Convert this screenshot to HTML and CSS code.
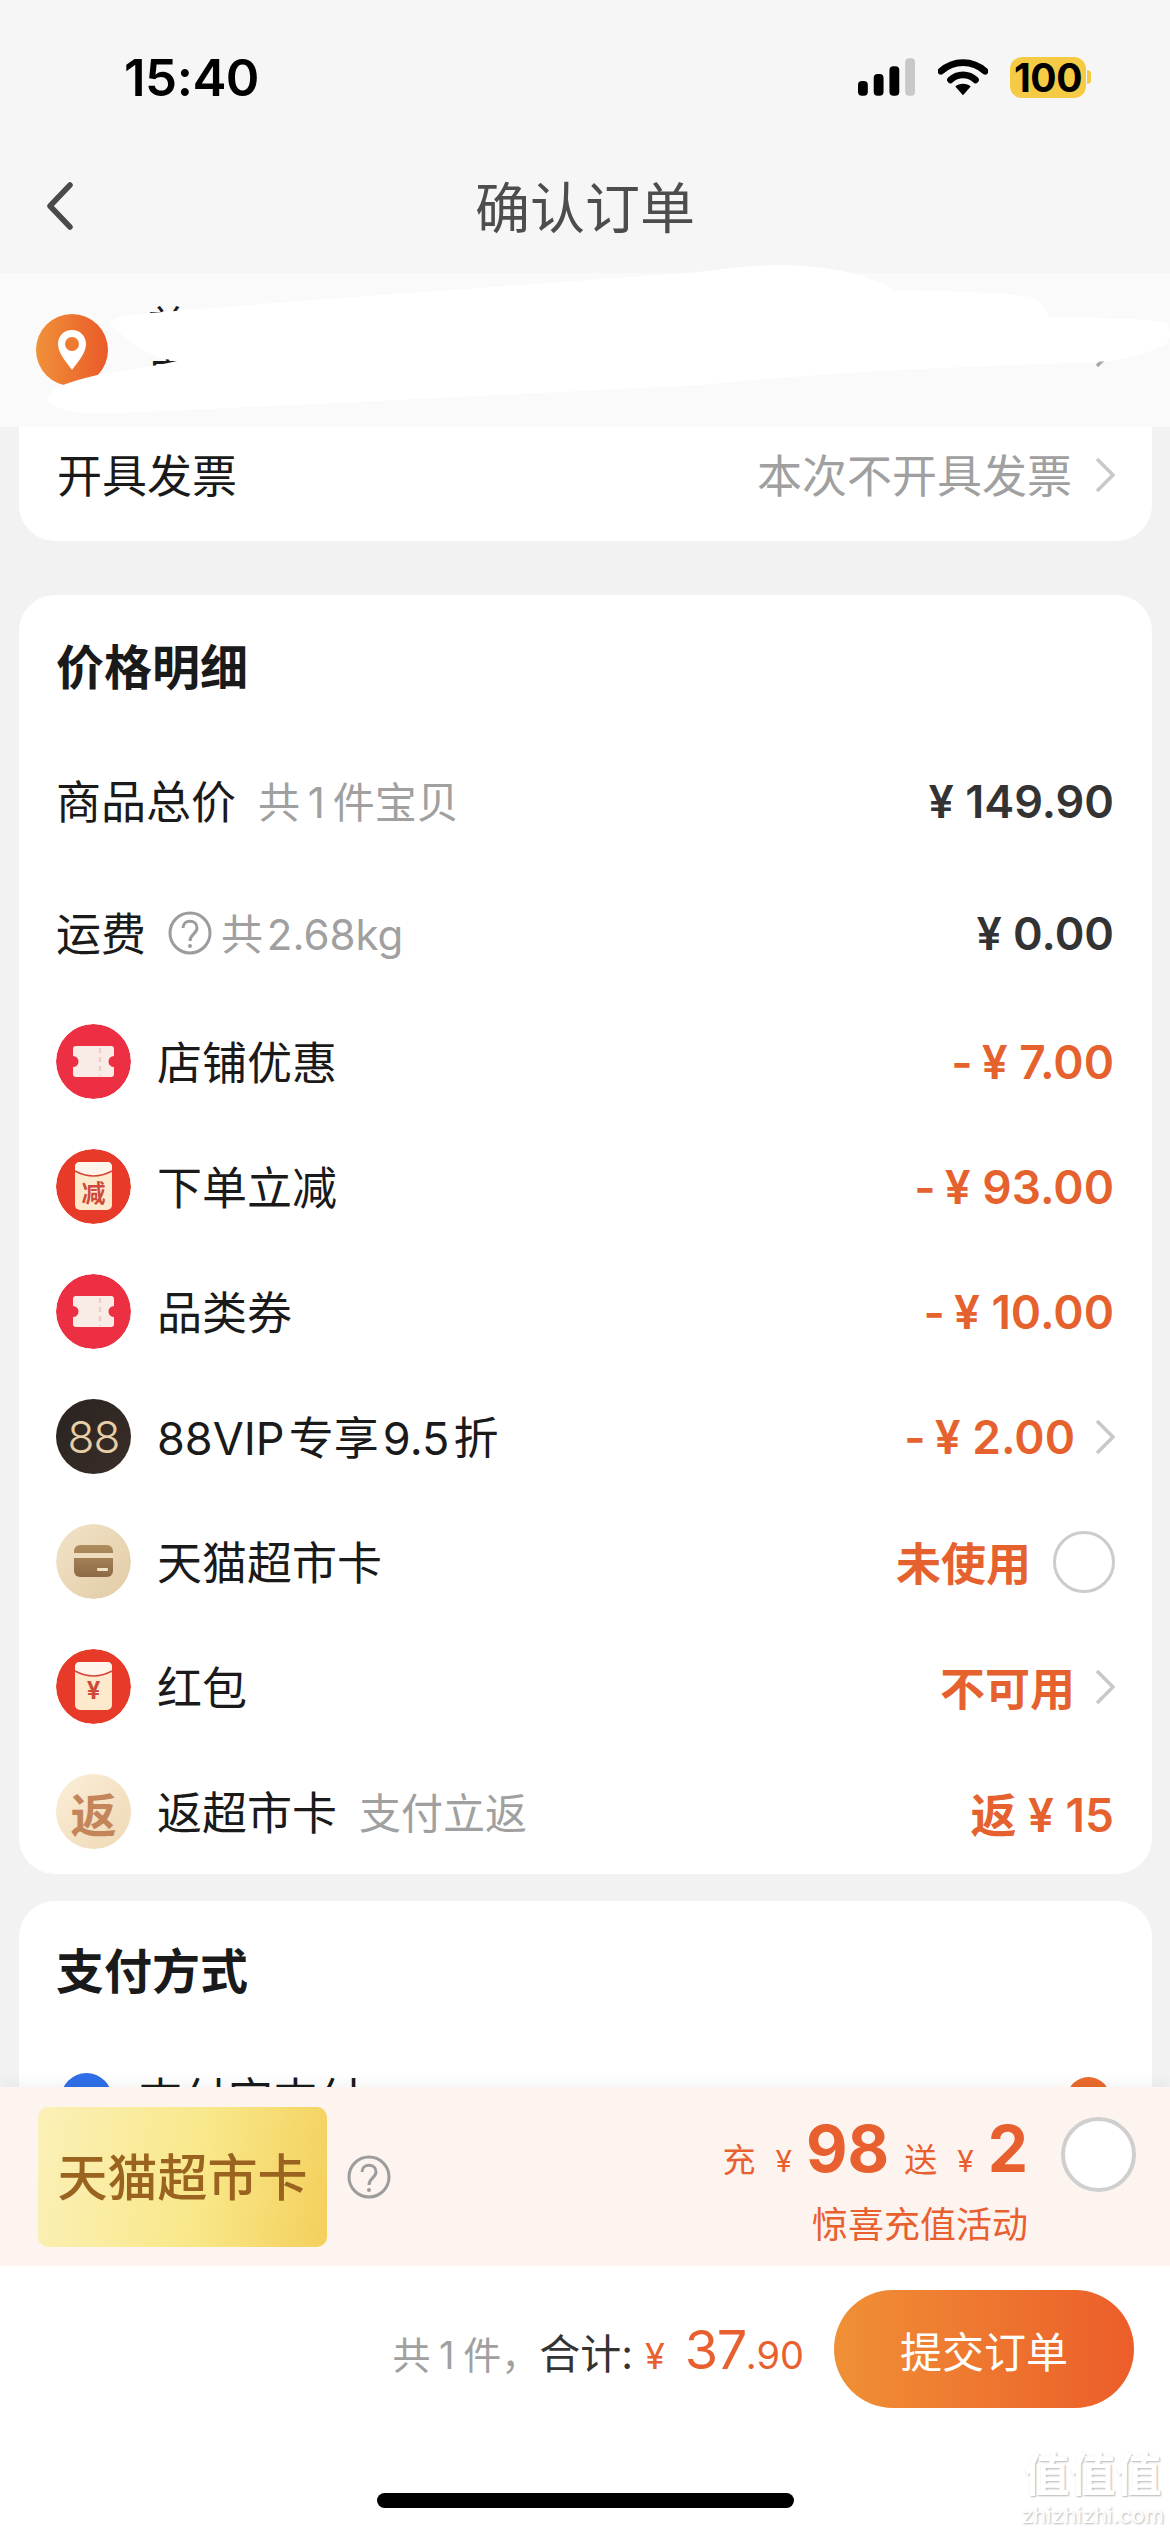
FILE: index.html
```html
<!DOCTYPE html>
<html lang="zh-CN">
<head>
  <meta charset="UTF-8" />
  <meta name="viewport" content="width=device-width, initial-scale=1.0" />
  <title>确认订单</title>
  <link rel="stylesheet" href="styles.css">
</head>

<body>
  <main class="app">
    <header class="top">
      <div class="status-bar">
        <span class="time">15:40</span>
        <div class="status-icons">
          <svg class="signal" width="57" height="38" viewBox="0 0 58 38">
            <rect x="0" y="23" width="10" height="15" rx="4" fill="#000" />
            <rect x="16" y="16" width="10" height="22" rx="4" fill="#000" />
            <rect x="32" y="8" width="10" height="30" rx="4" fill="#000" />
            <rect x="48" y="0" width="10" height="38" rx="4" fill="#c8c8c8" />
          </svg>
          <svg class="wifi" width="50" height="38" viewBox="0 0 52 38">
            <path d="M3 13 C16 1 36 1 49 13" fill="none" stroke="#000" stroke-width="7" stroke-linecap="round" />
            <path d="M13 22 C20 15 32 15 39 22" fill="none" stroke="#000" stroke-width="7" stroke-linecap="round" />
            <path d="M18 29 C22 25 30 25 34 29 L26 38 Z" fill="#000" />
          </svg>
          <div class="battery">
            <span class="battery-level">100</span>
            <span class="battery-nub"></span>
          </div>
        </div>
      </div>

      <nav class="nav">
        <svg class="back" width="28" height="48" viewBox="0 0 28 48">
          <path d="M24 3 L4 24 L24 45" fill="none" stroke="#4a4a4a" stroke-width="5.5" stroke-linecap="round" stroke-linejoin="round" />
        </svg>
        <h1>确认订单</h1>
      </nav>
    </header>

    <section class="address">
      <span class="pin">
        <svg width="32" height="42" viewBox="0 0 30 42">
          <path d="M15 1 C7 1 1 7 1 15 C1 25 11 35 15 41 C19 35 29 25 29 15 C29 7 23 1 15 1 Z" fill="#fff" />
          <circle cx="15" cy="15" r="7" fill="#ee7a33" />
        </svg>
      </span>
      <div class="address-text">
        <span>首</span>
        <span>电</span>
      </div>
      <svg class="chevron" width="20" height="36" viewBox="0 0 20 36">
        <path d="M2 2 L18 18 L2 34" fill="none" stroke="#aaa" stroke-width="3.5" />
      </svg>
      <svg class="scribble" width="1170" height="154" viewBox="0 273 1170 154">
        <path d="M110 323 C112 318 125 315 150 313 C300 300 500 287 700 272 C730 268 760 265 785 265 C830 266 870 275 895 290 C950 291 1010 293 1030 297 C1042 302 1048 310 1048 317 C1100 318 1150 319 1165 322 C1172 328 1172 338 1165 345 C1150 352 1130 358 1110 361 C1000 367 900 366 700 385 C500 395 300 405 120 413 C80 415 50 410 47 398 C50 390 60 384 97 375 C120 371 150 367 177 361 C150 358 125 340 110 323 Z" fill="#fff" />
      </svg>
    </section>

    <div class="content">
      <section class="card invoice-card">
        <span class="label">开具发票</span>
        <span class="right muted">本次不开具发票
          <svg class="chevron-small" width="20" height="36" viewBox="0 0 20 36">
            <path d="M2 2 L18 18 L2 34" fill="none" stroke="#c8c8c8" stroke-width="3.5" />
          </svg>
        </span>
      </section>

      <section class="card price-card">
        <h2>价格明细</h2>

        <div class="row plain-row">
          <span class="label">商品总价</span>
          <span class="hint">共 1 件宝贝</span>
          <span class="amount dark">¥ 149.90</span>
        </div>

        <div class="row plain-row">
          <span class="label">运费</span>
          <svg class="help" width="44" height="44" viewBox="0 0 44 44">
            <circle cx="22" cy="22" r="20" fill="none" stroke="#9c9c9c" stroke-width="3" />
            <path d="M15 17 C15 8 29 8 29 17 C29 23 22 23 22 30" fill="none" stroke="#9c9c9c" stroke-width="3" />
            <circle cx="22" cy="35" r="2" fill="#9c9c9c" />
          </svg>
          <span class="hint">共 2.68kg</span>
          <span class="amount dark">¥ 0.00</span>
        </div>

        <div class="row icon-row">
          <svg class="coin" width="75" height="75" viewBox="0 0 75 75">
            <circle cx="37.5" cy="37.5" r="37.5" fill="#ec2f42" />
            <path d="M20 22 H55 Q58 22 58 25 V32 A5.5 5.5 0 0 0 58 43 V50 Q58 53 55 53 H20 Q17 53 17 50 V43 A5.5 5.5 0 0 0 17 32 V25 Q17 22 20 22 Z" fill="#f9ebe6" />
            <path d="M44 24 V52" stroke="#eccdc8" stroke-width="2.5" stroke-dasharray="5 4" />
          </svg>
          <span class="label">店铺优惠</span>
          <span class="amount num"><span class="minus">-</span>¥ 7.00</span>
        </div>

        <div class="row icon-row">
          <svg class="coin" width="75" height="75" viewBox="0 0 75 75">
            <circle cx="37.5" cy="37.5" r="37.5" fill="#e83a28" />
            <rect x="19" y="13" width="37" height="48" rx="5" fill="#fdeacd" />
            <path d="M19 18 Q19 13 24 13 H51 Q56 13 56 18 V22 Q37.500 32 19 22 Z" fill="#fff5ea" />
            <path d="M19 22 Q37.500 32 56 22" fill="none" stroke="#d8483a" stroke-width="1.500" />
            <text x="37.500" y="53" text-anchor="middle" class="envelope-text">减</text>
          </svg>
          <span class="label">下单立减</span>
          <span class="amount num"><span class="minus">-</span>¥ 93.00</span>
        </div>

        <div class="row icon-row">
          <svg class="coin" width="75" height="75" viewBox="0 0 75 75">
            <circle cx="37.5" cy="37.5" r="37.5" fill="#ec2f42" />
            <path d="M20 22 H55 Q58 22 58 25 V32 A5.5 5.5 0 0 0 58 43 V50 Q58 53 55 53 H20 Q17 53 17 50 V43 A5.5 5.5 0 0 0 17 32 V25 Q17 22 20 22 Z" fill="#f9ebe6" />
            <path d="M44 24 V52" stroke="#eccdc8" stroke-width="2.5" stroke-dasharray="5 4" />
          </svg>
          <span class="label">品类券</span>
          <span class="amount num"><span class="minus">-</span>¥ 10.00</span>
        </div>

        <div class="row icon-row">
          <span class="coin vip-coin">88</span>
          <span class="label">88VIP 专享 9.5 折</span>
          <span class="amount num with-chevron"><span class="minus">-</span>¥ 2.00</span>
          <svg class="chevron-small" width="20" height="36" viewBox="0 0 20 36">
            <path d="M2 2 L18 18 L2 34" fill="none" stroke="#c8c8c8" stroke-width="3.5" />
          </svg>
        </div>

        <div class="row icon-row">
          <svg class="coin" width="75" height="75" viewBox="0 0 75 75">
            <defs>
              <linearGradient id="cardBg" x1="0" y1="0" x2="1" y2="1">
                <stop offset="0" stop-color="#f2e3c8" />
                <stop offset="1" stop-color="#e2cba6" />
              </linearGradient>
              <linearGradient id="cardFill" x1="0" y1="0" x2="0" y2="1">
                <stop offset="0" stop-color="#b08d5f" />
                <stop offset="1" stop-color="#8d6a45" />
              </linearGradient>
            </defs>
            <circle cx="37.5" cy="37.5" r="37.5" fill="url(#cardBg)" />
            <rect x="18" y="21" width="39" height="32" rx="6" fill="url(#cardFill)" />
            <rect x="18" y="29" width="39" height="5" fill="#efdcbc" />
            <rect x="41" y="44" width="11" height="3" rx="1" fill="#f3e4c8" />
          </svg>
          <span class="label">天猫超市卡</span>
          <span class="amount with-radio">未使用</span>
          <span class="radio"></span>
        </div>

        <div class="row icon-row">
          <svg class="coin" width="75" height="75" viewBox="0 0 75 75">
            <circle cx="37.5" cy="37.5" r="37.5" fill="#e83a28" />
            <rect x="19" y="13" width="37" height="48" rx="5" fill="#fdeacd" />
            <path d="M19 18 Q19 13 24 13 H51 Q56 13 56 18 V22 Q37.500 32 19 22 Z" fill="#fff5ea" />
            <path d="M19 22 Q37.500 32 56 22" fill="none" stroke="#d8483a" stroke-width="1.500" />
            <text x="37.500" y="50" text-anchor="middle" class="envelope-text">¥</text>
          </svg>
          <span class="label">红包</span>
          <span class="amount with-chevron">不可用</span>
          <svg class="chevron-small" width="20" height="36" viewBox="0 0 20 36">
            <path d="M2 2 L18 18 L2 34" fill="none" stroke="#c8c8c8" stroke-width="3.5" />
          </svg>
        </div>

        <div class="row icon-row">
          <span class="coin back-coin">返</span>
          <span class="label">返超市卡</span>
          <span class="hint">支付立返</span>
          <span class="amount num">返 ¥ 15</span>
        </div>
      </section>

      <section class="card pay-card">
        <h2>支付方式</h2>
        <div class="pay-row">
          <span class="pay-logo"></span>
          <span class="label">支付宝支付</span>
          <span class="pay-check"></span>
        </div>
      </section>
    </div>

    <section class="promo">
      <div class="promo-badge">天猫超市卡</div>
      <svg class="help" width="44" height="44" viewBox="0 0 44 44">
        <circle cx="22" cy="22" r="20" fill="none" stroke="#9c9c9c" stroke-width="3" />
        <path d="M15 17 C15 8 29 8 29 17 C29 23 22 23 22 30" fill="none" stroke="#9c9c9c" stroke-width="3" />
        <circle cx="22" cy="35" r="2" fill="#9c9c9c" />
      </svg>
      <div class="promo-text">
        <div class="promo-line">
          <span class="promo-small">充</span>
          <span class="promo-yen">¥</span>
          <span class="promo-big">98</span>
          <span class="promo-small">送</span>
          <span class="promo-yen">¥</span>
          <span class="promo-big">2</span>
        </div>
        <div class="promo-note">惊喜充值活动</div>
      </div>
      <span class="promo-radio"></span>
    </section>

    <footer class="footer">
      <div class="submit-row">
        <div class="total">
          <span class="count">共 1 件，</span>
          <span class="sum-label">合计:</span>
          <span class="sum-yen">¥</span>
          <span class="sum-int">37</span><span class="sum-dec">.90</span>
        </div>
        <button class="submit">提交订单</button>
      </div>
      <div class="home-bar"></div>
      <div class="watermark">
        <span class="watermark-cn">值值值</span>
        <span class="watermark-en">zhizhizhi.com</span>
      </div>
    </footer>
  </main>
</body>
</html>
```

FILE: styles.css
```css
* {
  box-sizing: border-box;
}

html,
body {
  margin: 0;
  padding: 0;
}

body {
  font-family: Inter, "Noto Sans CJK SC", sans-serif;
  background: #f2f2f2;
  color: #1a1a1a;
}

.app {
  position: relative;
  display: flex;
  flex-direction: column;
  width: 1170px;
  height: 2532px;
  overflow: hidden;
}

/* status bar and title */
.top {
  height: 273px;
  background: #f6f6f6;
}

.status-bar {
  display: flex;
  align-items: center;
  justify-content: space-between;
  height: 154px;
  padding: 0 79px 0 124px;
}

.time {
  font-size: 51px;
  font-weight: 600;
  color: #000;
  letter-spacing: -0.5px;
}

.status-icons {
  display: flex;
  align-items: center;
}

.wifi {
  margin-left: 23px;
}

.battery {
  display: flex;
  align-items: center;
  margin-left: 22px;
}

.battery-level {
  display: flex;
  align-items: center;
  justify-content: center;
  width: 76px;
  height: 41px;
  border-radius: 12px;
  background: #f5cb45;
  font-size: 39px;
  font-weight: 700;
  letter-spacing: -0.5px;
  color: #000;
}

.battery-nub {
  width: 4px;
  height: 14px;
  margin-left: 1px;
  border-radius: 0 4px 4px 0;
  background: #f5cb45;
}

.nav {
  position: relative;
  display: flex;
  align-items: center;
  justify-content: center;
  height: 102px;
}

.nav h1 {
  margin: 0;
  padding-bottom: 3px;
  font-size: 55px;
  font-weight: 400;
  color: #4d4d4d;
}

.back {
  position: absolute;
  left: 46px;
  top: 28px;
}

/* address strip, mostly painted over */
.address {
  position: relative;
  display: flex;
  align-items: center;
  height: 154px;
  padding: 0 55px 0 36px;
  background: #fafafa;
}

.pin {
  display: flex;
  align-items: center;
  justify-content: center;
  width: 72px;
  height: 72px;
  border-radius: 50%;
  background: linear-gradient(90deg, #f0913a, #ea5a28);
}

.address-text {
  display: flex;
  flex: 1;
  flex-direction: column;
  margin-left: 40px;
  font-size: 40px;
  line-height: 49px;
}

.scribble {
  position: absolute;
  left: 0;
  top: 0;
  overflow: visible;
}

.content {
  flex: 1;
  min-height: 0;
  padding: 0 18px 0 19px;
  overflow: hidden;
}

.card {
  background: #fff;
  border-radius: 36px;
}

.label {
  padding-bottom: 3px;
  font-size: 45px;
  word-spacing: -8.5px;
  color: #1a1a1a;
  white-space: nowrap;
}

.invoice-card {
  display: flex;
  align-items: center;
  justify-content: space-between;
  height: 114px;
  padding: 0 37px 18px 38px;
  border-radius: 0 0 36px 36px;
}

.right {
  display: flex;
  align-items: center;
  gap: 23px;
}

.muted {
  padding-bottom: 3px;
  font-size: 45px;
  color: #a0a0a0;
}

.muted svg {
  margin-top: 3px;
}

.price-card {
  margin-top: 54px;
  padding: 0 37px;
}

.card h2 {
  display: flex;
  align-items: center;
  height: 140px;
  margin: 0;
  padding-bottom: 3px;
  font-size: 48px;
  font-weight: 700;
  color: #1a1a1a;
}

.row {
  display: flex;
  align-items: center;
}

.plain-row {
  height: 132px;
}

.icon-row {
  height: 125px;
}

.hint {
  margin-left: 22px;
  padding-bottom: 3px;
  font-size: 42px;
  word-spacing: -4px;
  color: #a0a0a0;
  white-space: nowrap;
}

.help {
  flex: none;
  margin-left: 22px;
}

.help + .hint {
  margin-left: 9px;
  word-spacing: -8px;
}

.amount {
  margin-left: auto;
  margin-right: 1px;
  font-size: 45px;
  font-weight: 600;
  color: #e5622f;
  white-space: nowrap;
}

.amount.num {
  font-size: 46px;
}

.amount.dark {
  color: #333;
}

.minus {
  margin-right: 9px;
}

.amount.with-chevron {
  margin-right: 20px;
}

.amount.with-radio {
  margin-right: 22px;
}

.coin {
  flex: none;
  display: flex;
  align-items: center;
  justify-content: center;
  width: 75px;
  height: 75px;
  margin-right: 26px;
  border-radius: 50%;
}

.vip-coin {
  background: linear-gradient(135deg, #2a2320, #3a2f29);
  font-size: 44px;
  font-weight: 300;
  letter-spacing: -1px;
  color: #e8cfa6;
}

.back-coin {
  background: linear-gradient(135deg, #fbeed8, #efd8b4);
  font-size: 46px;
  font-weight: 700;
  color: #c4855a;
}

.envelope-text {
  font-size: 24px;
  font-weight: 700;
  fill: #cf4a3a;
}

.radio {
  flex: none;
  width: 62px;
  height: 62px;
  border: 3px solid #cccccc;
  border-radius: 50%;
}

.pay-card {
  margin-top: 27px;
  padding: 0 38px 0 37px;
  height: 400px;
}

.pay-card h2 {
  height: 136px;
}

.pay-row {
  display: flex;
  align-items: center;
  height: 122px;
}

.pay-logo {
  width: 51px;
  height: 51px;
  margin-left: 5px;
  margin-right: 26px;
  border-radius: 50%;
  background: #2f6fe8;
}

.pay-check {
  width: 43px;
  height: 43px;
  margin-left: auto;
  margin-right: 4px;
  border-radius: 50%;
  background: #ea6a2c;
}

/* recharge strip above the footer */
.promo {
  position: relative;
  display: flex;
  align-items: center;
  flex: none;
  height: 179px;
  padding: 0 34px 0 38px;
  background: #fdf4f0;
  box-shadow: 0 -6px 12px rgba(0, 0, 0, 0.04);
}

.promo-badge {
  display: flex;
  align-items: center;
  justify-content: center;
  width: 289px;
  height: 140px;
  padding-bottom: 6px;
  border-radius: 10px;
  background: linear-gradient(100deg, #fbf0b8 0%, #f9e88a 55%, #f4cf5c 100%);
  font-size: 50px;
  font-weight: 500;
  color: #9a6420;
}

.promo .help {
  margin-left: 20px;
}

.promo-text {
  margin-left: auto;
  margin-right: 33px;
  margin-top: 8px;
  text-align: right;
  color: #e8602f;
}

.promo-line {
  display: flex;
  align-items: baseline;
  justify-content: flex-end;
  line-height: 76px;
}

.promo-small {
  font-size: 33px;
  margin-right: 20px;
}

.promo-yen {
  font-size: 30px;
  margin-right: 14px;
}

.promo-big {
  font-size: 64px;
  font-weight: 700;
  margin-right: 15px;
}

.promo-big:last-child {
  margin-right: 0;
}

.promo-note {
  font-size: 36px;
  line-height: 52px;
}

.promo-radio {
  flex: none;
  width: 75px;
  height: 75px;
  margin-top: -44px;
  border: 4px solid #cfcfcf;
  border-radius: 50%;
  background: #fff;
}

.footer {
  position: relative;
  flex: none;
  height: 266px;
  background: #fff;
}

.submit-row {
  display: flex;
  align-items: center;
  justify-content: flex-end;
  height: 118px;
  margin-top: 24px;
  padding-right: 36px;
}

.total {
  display: flex;
  align-items: baseline;
}

.count {
  font-size: 38px;
  word-spacing: -2px;
  color: #a0a0a0;
}

.sum-label {
  margin-right: 12px;
  font-size: 41px;
  color: #333;
}

.sum-yen {
  margin-right: 20px;
  font-size: 36px;
  color: #e8602f;
}

.sum-int {
  font-size: 54px;
  letter-spacing: -1.5px;
  color: #e8602f;
}

.sum-dec {
  font-size: 38px;
  color: #e8602f;
}

.submit {
  width: 300px;
  height: 118px;
  margin-left: 30px;
  padding: 0;
  border: none;
  border-radius: 59px;
  background: linear-gradient(90deg, #f09035, #ec5d2a);
  font-family: inherit;
  font-size: 42px;
  color: #fff;
}

.home-bar {
  position: absolute;
  left: 377px;
  bottom: 24px;
  width: 417px;
  height: 15px;
  border-radius: 8px;
  background: #000;
}

.watermark {
  position: absolute;
  right: 6px;
  bottom: 4px;
  display: flex;
  flex-direction: column;
  align-items: center;
  color: #fff;
  text-shadow: 1px 1px 2px #b5b5b5;
}

.watermark-cn {
  font-size: 46px;
  font-weight: 700;
  line-height: 56px;
}

.watermark-en {
  font-size: 22px;
  line-height: 26px;
}
```
